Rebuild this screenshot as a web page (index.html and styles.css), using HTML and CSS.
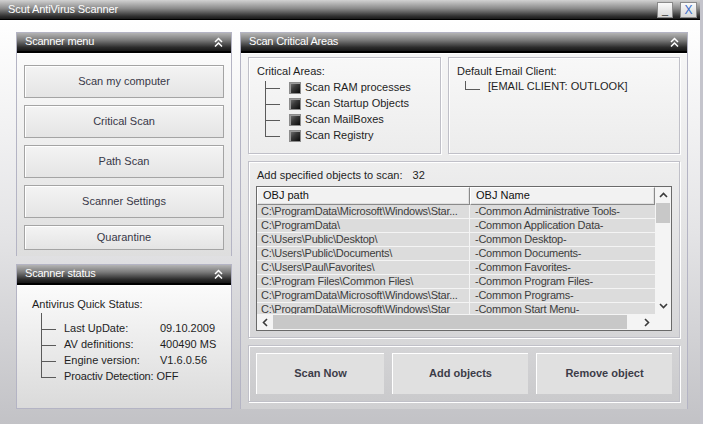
FILE: index.html
```html
<!DOCTYPE html>
<html>
<head>
<meta charset="utf-8">
<link rel="stylesheet" href="styles.css">
</head>
<body>
<div class="window">
  <div class="titlebar">
    <span class="title">Scut AntiVirus Scanner</span>
    <div class="tb-btns">
      <div class="tb-btn min">_</div>
      <div class="tb-btn close">X</div>
    </div>
  </div>
  <div class="content">
    <div class="left-col">
      <section class="panel menu-panel">
        <header class="phead">
          <span>Scanner menu</span>
          <svg class="chev" width="9" height="10" viewBox="0 0 9 10"><polyline points="1,5 4.5,1.5 8,5" /><polyline points="1,9.5 4.5,6 8,9.5" /></svg>
        </header>
        <div class="pbody menu-body">
          <button class="mbtn">Scan my computer</button>
          <button class="mbtn">Critical Scan</button>
          <button class="mbtn">Path Scan</button>
          <button class="mbtn">Scanner Settings</button>
          <button class="mbtn short">Quarantine</button>
        </div>
      </section>
      <section class="panel status-panel">
        <header class="phead">
          <span>Scanner status</span>
          <svg class="chev" width="9" height="10" viewBox="0 0 9 10"><polyline points="1,5 4.5,1.5 8,5" /><polyline points="1,9.5 4.5,6 8,9.5" /></svg>
        </header>
        <div class="pbody status-body">
          <div class="status-title">Antivirus Quick Status:</div>
          <ul class="tree status-tree">
            <li><span class="k">Last UpDate:</span><span>09.10.2009</span></li>
            <li><span class="k">AV definitions:</span><span>400490 MS</span></li>
            <li><span class="k">Engine version:</span><span>V1.6.0.56</span></li>
            <li><span class="kl">Proactiv Detection:</span><span>OFF</span></li>
          </ul>
        </div>
      </section>
    </div>
    <section class="panel right-panel">
      <header class="phead">
        <span>Scan Critical Areas</span>
        <svg class="chev" width="9" height="10" viewBox="0 0 9 10"><polyline points="1,5 4.5,1.5 8,5" /><polyline points="1,9.5 4.5,6 8,9.5" /></svg>
      </header>
      <div class="pbody right-body">
        <div class="top-row">
          <div class="box crit-box">
            <div class="box-label">Critical Areas:</div>
            <ul class="tree crit-tree">
              <li><i class="cb"></i>Scan RAM processes</li>
              <li><i class="cb"></i>Scan Startup Objects</li>
              <li><i class="cb"></i>Scan MailBoxes</li>
              <li><i class="cb"></i>Scan Registry</li>
            </ul>
          </div>
          <div class="box mail-box">
            <div class="box-label">Default Email Client:</div>
            <div class="mail-item"><span class="elbow"></span>[EMAIL CLIENT: OUTLOOK]</div>
          </div>
        </div>
        <div class="box add-box">
          <div class="add-label"><span>Add specified objects to scan:</span><span class="count">32</span></div>
          <div class="table">
            <div class="t-main">
              <div class="t-head">
                <div class="th c1">OBJ path</div>
                <div class="th c2">OBJ Name</div>
              </div>
              <div class="t-rows">
                <div class="tr"><div class="td c1">C:\ProgramData\Microsoft\Windows\Star...</div><div class="td c2">-Common Administrative Tools-</div></div>
                <div class="tr"><div class="td c1">C:\ProgramData\</div><div class="td c2">-Common Application Data-</div></div>
                <div class="tr"><div class="td c1">C:\Users\Public\Desktop\</div><div class="td c2">-Common Desktop-</div></div>
                <div class="tr"><div class="td c1">C:\Users\Public\Documents\</div><div class="td c2">-Common Documents-</div></div>
                <div class="tr"><div class="td c1">C:\Users\Paul\Favorites\</div><div class="td c2">-Common Favorites-</div></div>
                <div class="tr"><div class="td c1">C:\Program Files\Common Files\</div><div class="td c2">-Common Program Files-</div></div>
                <div class="tr"><div class="td c1">C:\ProgramData\Microsoft\Windows\Star...</div><div class="td c2">-Common Programs-</div></div>
                <div class="tr"><div class="td c1">C:\ProgramData\Microsoft\Windows\Star</div><div class="td c2">-Common Start Menu-</div></div>
              </div>
              <div class="vscroll">
                <div class="sarrow"><svg width="9" height="6" viewBox="0 0 9 6"><polyline points="1,5 4.5,1.5 8,5"/></svg></div>
                <div class="vthumb"></div>
                <div class="vtrack"></div>
                <div class="sarrow"><svg width="9" height="6" viewBox="0 0 9 6"><polyline points="1,1 4.5,4.5 8,1"/></svg></div>
              </div>
            </div>
            <div class="hscroll">
              <div class="harrow"><svg width="6" height="9" viewBox="0 0 6 9"><polyline points="5,1 1.5,4.5 5,8"/></svg></div>
              <div class="hthumb"></div>
              <div class="htrack"></div>
              <div class="harrow"><svg width="6" height="9" viewBox="0 0 6 9"><polyline points="1,1 4.5,4.5 1,8"/></svg></div>
              <div class="corner"></div>
            </div>
          </div>
        </div>
        <div class="box action-box">
          <button class="abtn w1">Scan Now</button>
          <button class="abtn">Add objects</button>
          <button class="abtn">Remove object</button>
        </div>
      </div>
    </section>
  </div>
</div>
</body>
</html>
```
FILE: styles.css
```css
* { box-sizing: border-box; }
html, body { margin: 0; padding: 0; }
body {
  width: 703px;
  height: 424px;
  overflow: hidden;
  font-family: "Liberation Sans", Arial, sans-serif;
  font-size: 11px;
  color: #1e1e1e;
}
.window {
  width: 703px;
  height: 424px;
  background: linear-gradient(#ffffff 5%, #e4e4e6 55%, #c2c2c6 100%);
  border-right: 3px solid #c4c4cc;
}
.titlebar {
  height: 20px;
  display: flex;
  align-items: center;
  justify-content: space-between;
  padding: 0 3px 0 8px;
  background: linear-gradient(#d2d2d2 0%, #8a8a8a 45%, #303030 85%, #1a1a1a 100%);
  border-bottom: 1px solid #000;
}
.title {
  color: #fff;
  font-size: 11px;
  letter-spacing: -0.1px;
  margin-top: -2px;
}
.tb-btns { display: flex; gap: 7px; align-self: flex-start; margin-top: 2px; }
.tb-btn {
  width: 16px;
  height: 16px;
  border: 1px solid #8a8a8a;
  background: linear-gradient(#fafafa, #d8d8d8);
  font-size: 11px;
  line-height: 14px;
  text-align: center;
  color: #333;
}
.tb-btn.close { width: 17px; color: #3a6cc8; font-size: 12px; }

.content {
  display: flex;
  gap: 8px;
  padding: 12px 0 0 16px;
}
.left-col {
  width: 216px;
  display: flex;
  flex-direction: column;
  gap: 8px;
}
.panel {
  border: 1px solid #b4b4c4;
  display: flex;
  flex-direction: column;
}
.phead {
  height: 20px;
  flex: none;
  display: flex;
  align-items: center;
  justify-content: space-between;
  padding: 0 8px 3px 8px;
  background: linear-gradient(#b4b4b4 0%, #7a7a7a 40%, #2c2c2c 80%, #161616 100%);
  border-bottom: 2px solid #000;
  color: #fff;
  font-size: 11px;
  letter-spacing: -0.2px;
}
.chev { margin-top: 2px; }
.chev polyline { fill: none; stroke: #fff; stroke-width: 1.5; }
.pbody {
  flex: 1;
  background: linear-gradient(#fbfbfb, #dedede);
  border-top: 1px solid #fff;
}
.menu-panel { height: 224px; }
.menu-body {
  padding: 11px 7px 6px;
  display: flex;
  flex-direction: column;
  gap: 7px;
}
.mbtn {
  height: 33px;
  border: 1px solid #a4a4a4;
  box-shadow: inset 1px 1px 0 #fff;
  background: linear-gradient(#f4f4f4, #e4e4e4);
  font-family: "Liberation Sans", Arial, sans-serif;
  font-size: 11px;
  color: #383848;
  padding: 0 0 2px 0;
}
.mbtn.short { height: 25px; }

.status-panel { height: 145px; }
.status-body {
  padding: 11px 0 0 15px;
  background: linear-gradient(#fbfbfb, #dadada);
}
.status-title { line-height: 15px; }

ul.tree {
  list-style: none;
  margin: 0;
  padding: 0;
  position: relative;
}
ul.tree::before {
  content: "";
  position: absolute;
  left: 0;
  top: 0;
  bottom: 8px;
  border-left: 1px solid #5a5a5a;
}
ul.tree li {
  position: relative;
  height: 16px;
  display: flex;
  align-items: center;
  white-space: nowrap;
  padding-bottom: 2px;
}
ul.tree li::before {
  content: "";
  position: absolute;
  left: 0;
  top: 8px;
  width: 15px;
  border-top: 1px solid #5a5a5a;
}
.status-tree {
  margin: 0 0 0 9px !important;
  padding-top: 9px !important;
}
.status-tree::before { top: 1px !important; }
.status-tree li { padding-left: 23px; }
.status-tree .k { width: 96px; flex: none; }
.status-tree .kl { margin-right: 3px; letter-spacing: -0.15px; }

.right-panel { width: 448px; height: 377px; }
.right-body {
  padding: 3px 7px 7px;
  display: flex;
  flex-direction: column;
  gap: 7px;
  background: linear-gradient(#f6f6f6, #d0d0d2);
}
.box {
  border: 1px solid #c0c0c8;
  box-shadow: inset 1px 1px 0 #fff, 1px 1px 0 #fff;
}
.top-row { display: flex; gap: 7px; height: 97px; }
.crit-box { width: 193px; padding: 6px 0 0 8px; background: linear-gradient(#f8f8f8, #ececec); }
.mail-box { flex: 1; padding: 6px 0 0 8px; background: linear-gradient(#f8f8f8, #ececec); }
.box-label { line-height: 15px; }
.crit-tree { margin-left: 8px !important; margin-top: 1px !important; }
.crit-tree::before { top: 1px !important; }
.crit-tree li { padding-left: 24px; }
.crit-tree li::before { top: 7px; }
.cb {
  width: 12px;
  height: 12px;
  margin-right: 4px;
  margin-top: 2px;
  border: 1px solid #8c8c8c;
  background: linear-gradient(135deg, #7a7a7a 0%, #3a3a3a 45%, #0a0a0a 100%);
  box-shadow: inset 1px 1px 0 #9a9a9a;
}
.mail-item {
  position: relative;
  padding-left: 31px;
  line-height: 14px;
}
.elbow {
  position: absolute;
  left: 8px;
  top: 2px;
  width: 15px;
  height: 9px;
  border-left: 1px solid #5a5a5a;
  border-bottom: 1px solid #5a5a5a;
}

.add-box {
  height: 177px;
  padding: 6px 7px 0 7px;
  background: linear-gradient(#eeeeee, #d6d6d8);
}
.add-label { line-height: 15px; padding-left: 1px; margin-bottom: 3px; }
.add-label .count { margin-left: 10px; }
.table {
  width: 416px;
  height: 145px;
  border: 1px solid #6a6a6a;
  background: #fff;
  display: flex;
  flex-direction: column;
}
.t-main {
  flex: 1;
  display: grid;
  grid-template-columns: 1fr 16px;
  grid-template-rows: 18px 1fr;
  overflow: hidden;
}
.t-head { display: flex; grid-column: 1; }
.th {
  height: 18px;
  line-height: 14px;
  background: #f2f2f2;
  border: 1px solid #8a8a8a;
  border-top-color: #fff;
  border-left-color: #fff;
  box-shadow: inset -1px -1px 0 #e0e0e0;
  padding-left: 5px;
  color: #111;
}
.c1 { width: 213px; flex: none; }
.c2 { flex: 1; }
.t-head .c2 { padding-left: 5px; }
.t-rows {
  grid-column: 1;
  grid-row: 2;
  overflow: hidden;
  background: #dcdcdc;
}
.tr { display: flex; height: 14px; border-bottom: 1px solid #f4f4f4; }
.td {
  line-height: 12px;
  color: #3c3c3c;
  white-space: nowrap;
  overflow: hidden;
  padding-left: 4px;
  letter-spacing: -0.25px;
}
.td.c1 { border-right: 1px solid #f4f4f4; }
.td.c2 { padding-left: 5px; }
.vscroll {
  grid-column: 2;
  grid-row: 1 / 3;
  display: flex;
  flex-direction: column;
  background: #f4f4f4;
}
.sarrow { height: 16px; display: flex; align-items: center; justify-content: center; flex: none; }
.sarrow polyline, .harrow polyline { fill: none; stroke: #3a3a3a; stroke-width: 1.6; }
.vthumb { height: 20px; background: #c8c8c8; flex: none; margin: 0 1px; }
.vtrack { flex: 1; }
.hscroll {
  height: 16px;
  flex: none;
  display: flex;
  background: #f4f4f4;
}
.harrow { width: 16px; display: flex; align-items: center; justify-content: center; flex: none; }
.hthumb { width: 354px; background: #c8c8c8; margin: 1px 0; }
.htrack { flex: 1; }
.corner { width: 16px; background: #f4f4f4; }

.action-box {
  height: 57px;
  display: flex;
  gap: 8px;
  padding: 7px 7px;
  background: linear-gradient(#d4d4d6, #cacacc);
}
.abtn {
  width: 136px;
  height: 41px;
  background: #e0e0e0;
  border: none;
  border-top: 1px solid #fff;
  border-left: 1px solid #fff;
  font-family: "Liberation Sans", Arial, sans-serif;
  font-weight: bold;
  font-size: 11px;
  color: #3c3c48;
  padding: 0 0 2px 0;
}
.abtn.w1 { width: 128px; }
```
